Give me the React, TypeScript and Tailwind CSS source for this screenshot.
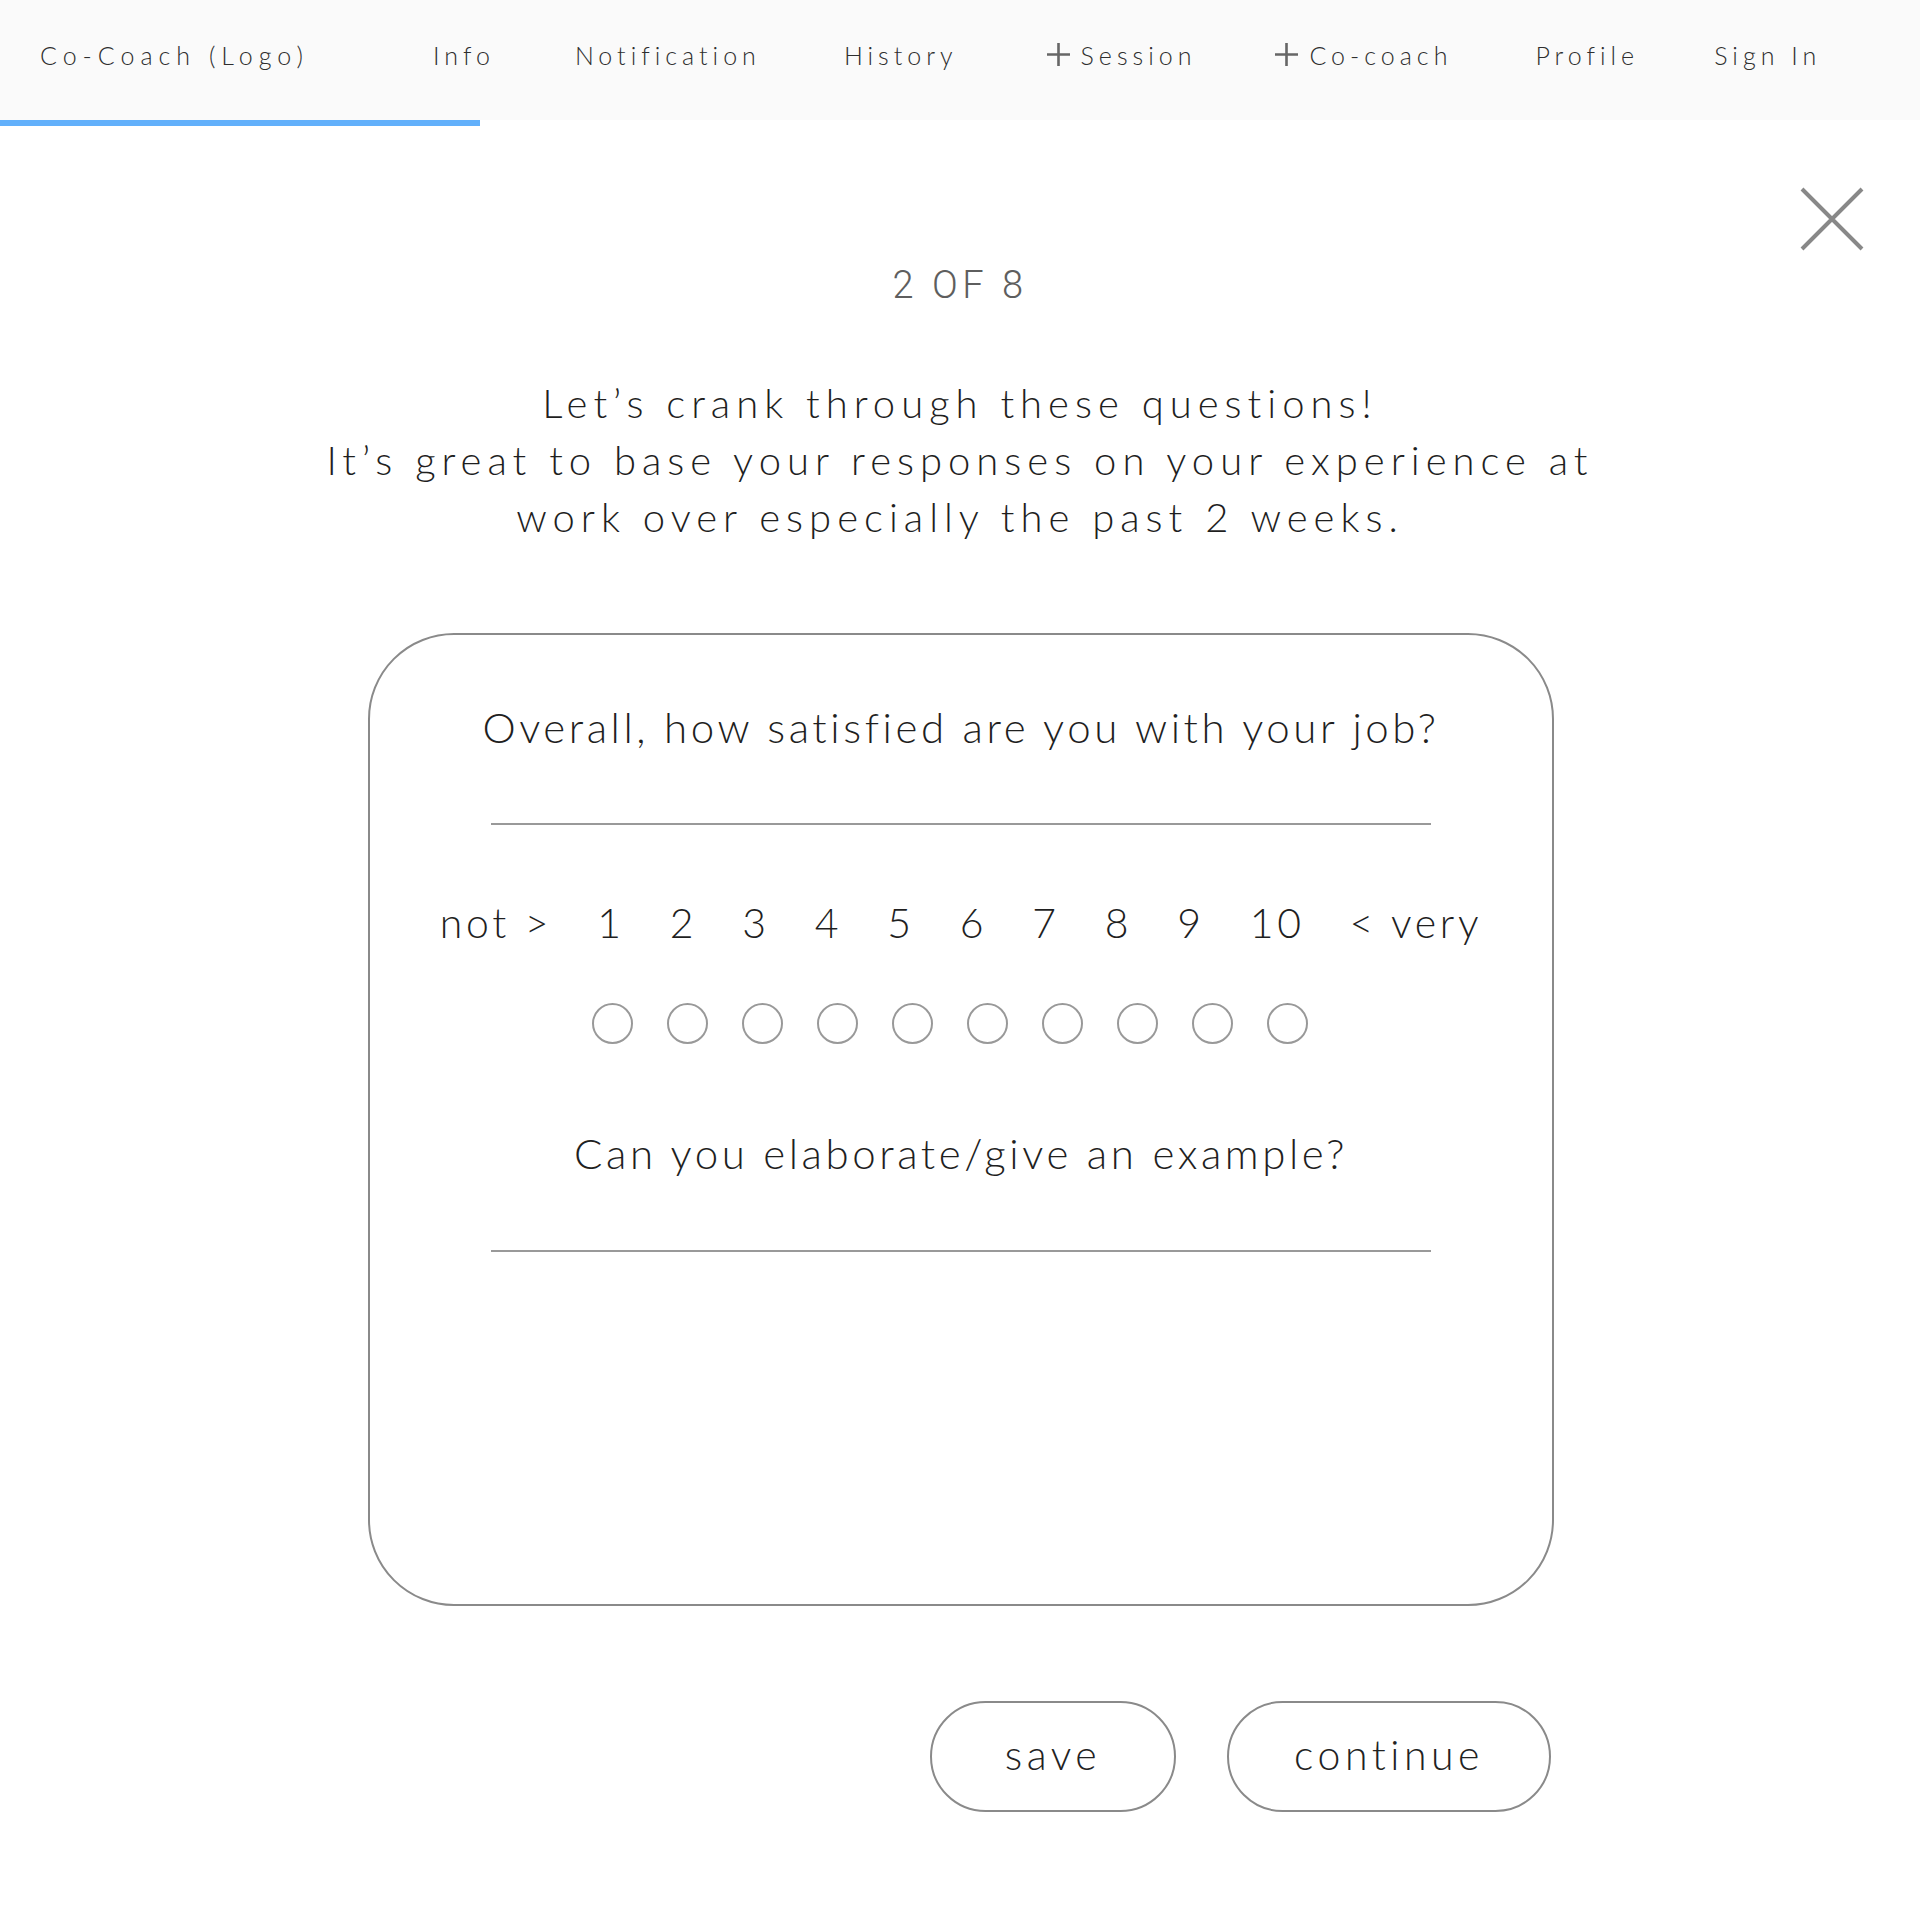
import React from "react";

const navItems = [
  { label: "Info", plus: false, ml: "ml-0" },
  { label: "Notification", plus: false, ml: "ml-[80px]" },
  { label: "History", plus: false, ml: "ml-[83px]" },
  { label: "Session", plus: true, ml: "ml-[88px]" },
  { label: "Co-coach", plus: true, ml: "ml-[78px]" },
  { label: "Profile", plus: false, ml: "ml-[83px]" },
  { label: "Sign In", plus: false, ml: "ml-[75px]" },
];

const Plus = () => (
  <svg width="25" height="25" viewBox="0 0 25 25" className="mr-[10px] -mt-[4px]">
    <path d="M12.5 1v23M1 12.5h23" stroke="#666" strokeWidth="2.6" />
  </svg>
);

const NavBar = () => {
  return (
    <nav className="flex h-[120px] items-center bg-[#fafafa] pb-[8px] pl-[40px] text-[25px] tracking-[0.2em] text-[#2e2e2e]">
      <span className="w-[393px] tracking-[0.24em]">Co-Coach (Logo)</span>
      <div className="flex items-center">
        {navItems.map((item) => (
          <span key={item.label} className={`flex items-center ${item.ml}`}>
            {item.plus && <Plus />}
            {item.label}
          </span>
        ))}
      </div>
    </nav>
  );
};

const CloseIcon = () => (
  <svg width="64" height="64" viewBox="0 0 64 64">
    <path d="M2 2l60 60M62 2L2 62" stroke="#888" strokeWidth="4" />
  </svg>
);

const Scale = () => {
  const nums = [1, 2, 3, 4, 5, 6, 7, 8, 9, 10];
  return (
    <>
      <div className="mt-[74px] flex items-center justify-center gap-[45px] text-[41px] leading-[48px] tracking-[0.09em]">
        <span>not &gt;</span>
        {nums.map((n) => (
          <span key={n}>{n}</span>
        ))}
        <span>&lt; very</span>
      </div>
      <div className="mt-[56px] flex justify-center gap-[34px] pr-[22px]">
        {nums.map((n) => (
          <span
            key={n}
            className="h-[41px] w-[41px] rounded-full border-[2px] border-[#999]"
          />
        ))}
      </div>
    </>
  );
};

export default function App() {
  return (
    <div
      className="relative min-h-[1920px] bg-white font-light text-[#1f1f1f]"
      style={{ fontFamily: "Lato, 'Open Sans', sans-serif" }}
    >
      <NavBar />
      <div className="h-[6px] w-[480px] bg-[#62b0fb]" />

      <button className="absolute right-[56px] top-[187px]">
        <CloseIcon />
      </button>

      <main className="flex flex-col items-center">
        <p
          className="mt-[139px] text-[38px] leading-[40px] tracking-[0.12em] text-[#5e5e5e]"
          style={{ fontFamily: "Roboto, 'Liberation Sans', sans-serif" }}
        >
          2 OF 8
        </p>

        <p className="mt-[70px] text-center text-[40px] leading-[57px] tracking-[0.15em]">
          Let’s crank through these questions!
          <br />
          It’s great to base your responses on your experience at
          <br />
          work over especially the past 2 weeks.
        </p>

        <section className="ml-[2px] mt-[87px] flex h-[973px] w-[1186px] flex-col items-center rounded-[86px] border-[2px] border-[#8a8a8a] pt-[68px]">
          <h2 className="text-[42px] leading-[48px] tracking-[0.085em]">
            Overall, how satisfied are you with your job?
          </h2>
          <hr className="mt-[72px] w-[940px] border-t-[2px] border-[#999]" />

          <Scale />

          <h2 className="mt-[85px] text-[42px] leading-[48px] tracking-[0.085em]">
            Can you elaborate/give an example?
          </h2>
          <hr className="mt-[73px] w-[940px] border-t-[2px] border-[#999]" />
        </section>

        <div className="mt-[95px] flex w-[1186px] justify-end gap-[51px] pr-[2px]">
          <button className="h-[111px] w-[246px] rounded-full border-[2px] border-[#8a8a8a] pb-[4px] text-[41px] tracking-[0.11em] text-[#222]">
            save
          </button>
          <button className="h-[111px] w-[324px] rounded-full border-[2px] border-[#8a8a8a] pb-[4px] text-[41px] tracking-[0.11em] text-[#222]">
            continue
          </button>
        </div>
      </main>
    </div>
  );
}
